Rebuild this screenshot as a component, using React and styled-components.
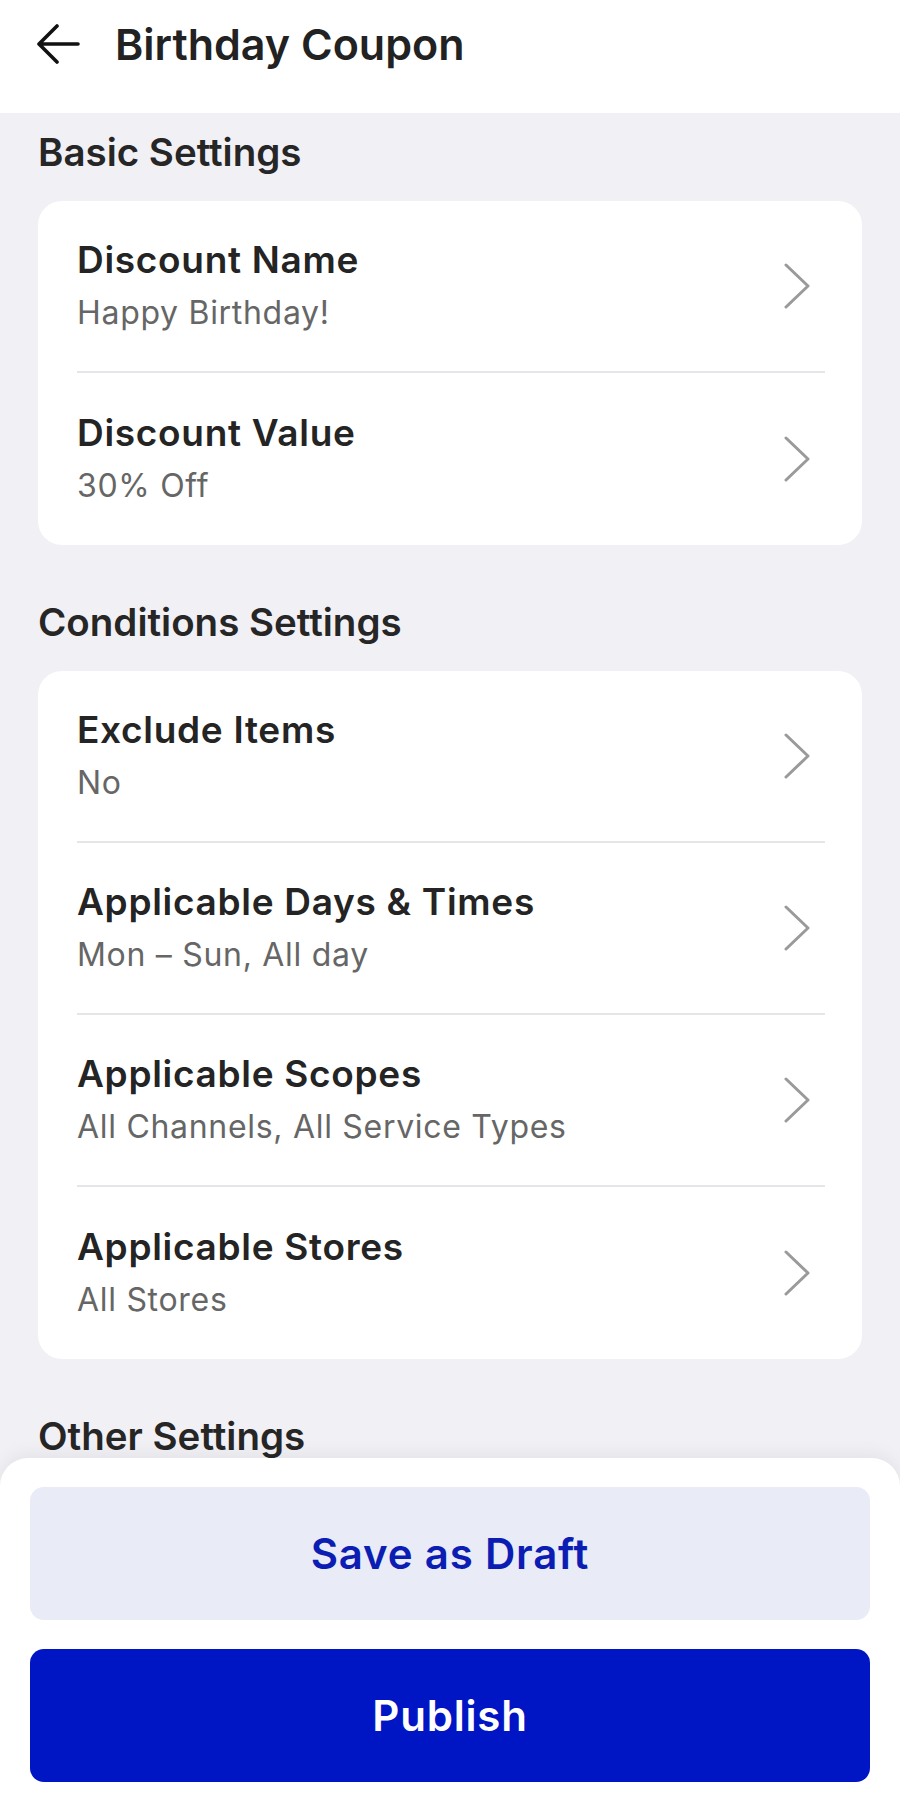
import styled, { createGlobalStyle } from 'styled-components';

const GlobalStyle = createGlobalStyle`
  html, body {
    margin: 0;
    padding: 0;
    background: #F0F0F5;
    font-family: Inter, "Noto Sans", "Liberation Sans", sans-serif;
    -webkit-font-smoothing: antialiased;
  }
  * {
    box-sizing: border-box;
  }
`;

const Page = styled.div`
  height: 1813px;
  background: #F0F0F5;
  position: relative;
  overflow: hidden;
`;

const Header = styled.header`
  height: 113px;
  background: #FFFFFF;
  display: flex;
  align-items: center;
  gap: 34px;
  padding: 0 0 25px 35px;
`;

const BackButton = styled.button`
  display: flex;
  align-items: center;
  justify-content: center;
  width: 46px;
  height: 46px;
  padding: 0;
  border: none;
  background: transparent;
  color: #111111;
  cursor: pointer;
`;

const HeaderTitle = styled.h1`
  margin: 0;
  font-size: 43px;
  line-height: 54px;
  font-weight: 600;
  color: #222222;
`;

const Content = styled.main`
  padding: 15px 38px 0;
  display: flex;
  flex-direction: column;
  gap: 53px;
`;

const Section = styled.section`
  display: flex;
  flex-direction: column;
  gap: 25px;
`;

const SectionTitle = styled.h2`
  margin: 0;
  height: 48px;
  line-height: 48px;
  font-size: 38.5px;
  font-weight: 600;
  color: #262626;
`;

const Card = styled.div`
  background: #FFFFFF;
  border-radius: 24px;
`;

const Row = styled.div`
  height: 172px;
  margin: 0 37px 0 39px;
  display: flex;
  align-items: center;
  justify-content: space-between;
  border-bottom: ${({ $last }) => ($last ? 'none' : '2px solid #E6E6EA')};
  cursor: pointer;
`;

const RowText = styled.div`
  display: flex;
  flex-direction: column;
  gap: 9px;
`;

const RowTitle = styled.div`
  font-size: 37px;
  line-height: 44px;
  font-weight: 600;
  letter-spacing: 0.7px;
  color: #242424;
`;

const RowValue = styled.div`
  font-size: 32px;
  line-height: 44px;
  font-weight: 400;
  letter-spacing: 0.7px;
  color: #666666;
`;

const Chevron = styled.svg`
  flex-shrink: 0;
  margin-right: 14px;
`;

const Sheet = styled.div`
  position: absolute;
  left: 0;
  right: 0;
  bottom: 0;
  height: 355px;
  background: #FFFFFF;
  border-radius: 28px 28px 0 0;
  box-shadow: 0 -4px 18px rgba(0, 0, 0, 0.06);
  padding: 29px 30px 30px;
  display: flex;
  flex-direction: column;
  gap: 29px;
`;

const ActionButton = styled.button`
  height: 133px;
  width: 100%;
  border: none;
  border-radius: 14px;
  font-family: inherit;
  font-size: 42px;
  font-weight: 600;
  letter-spacing: 0.8px;
  cursor: pointer;
  background: ${({ $primary }) => ($primary ? '#0015C4' : '#E9EBF6')};
  color: ${({ $primary }) => ($primary ? '#FFFFFF' : '#0B1DB2')};
`;

const sections = [
  {
    title: 'Basic Settings',
    rows: [
      { label: 'Discount Name', value: 'Happy Birthday!' },
      { label: 'Discount Value', value: '30% Off' },
    ],
  },
  {
    title: 'Conditions Settings',
    rows: [
      { label: 'Exclude Items', value: 'No' },
      { label: 'Applicable Days & Times', value: 'Mon – Sun, All day' },
      { label: 'Applicable Scopes', value: 'All Channels, All Service Types' },
      { label: 'Applicable Stores', value: 'All Stores' },
    ],
  },
  {
    title: 'Other Settings',
    rows: [],
  },
];

const ChevronRight = () => (
  <Chevron width="28" height="46" viewBox="0 0 28 46" fill="none">
    <path d="M3 2 L25 23 L3 44" stroke="#9A9A9A" strokeWidth="3" strokeLinecap="round" strokeLinejoin="round" />
  </Chevron>
);

const ArrowLeft = () => (
  <svg width="44" height="40" viewBox="0 0 44 40" fill="none">
    <path d="M42 20 H4 M21 2 L3 20 L21 38" stroke="currentColor" strokeWidth="3.6" strokeLinecap="round" strokeLinejoin="round" />
  </svg>
);

const App = () => (
  <>
    <GlobalStyle />
    <Page>
      <Header>
        <BackButton aria-label="Back">
          <ArrowLeft />
        </BackButton>
        <HeaderTitle>Birthday Coupon</HeaderTitle>
      </Header>
      <Content>
        {sections.map((section) => (
          <Section key={section.title}>
            <SectionTitle>{section.title}</SectionTitle>
            {section.rows.length > 0 && (
              <Card>
                {section.rows.map((row, i) => (
                  <Row key={row.label} $last={i === section.rows.length - 1}>
                    <RowText>
                      <RowTitle>{row.label}</RowTitle>
                      <RowValue>{row.value}</RowValue>
                    </RowText>
                    <ChevronRight />
                  </Row>
                ))}
              </Card>
            )}
          </Section>
        ))}
      </Content>
      <Sheet>
        <ActionButton>Save as Draft</ActionButton>
        <ActionButton $primary>Publish</ActionButton>
      </Sheet>
    </Page>
  </>
);

export default App;
